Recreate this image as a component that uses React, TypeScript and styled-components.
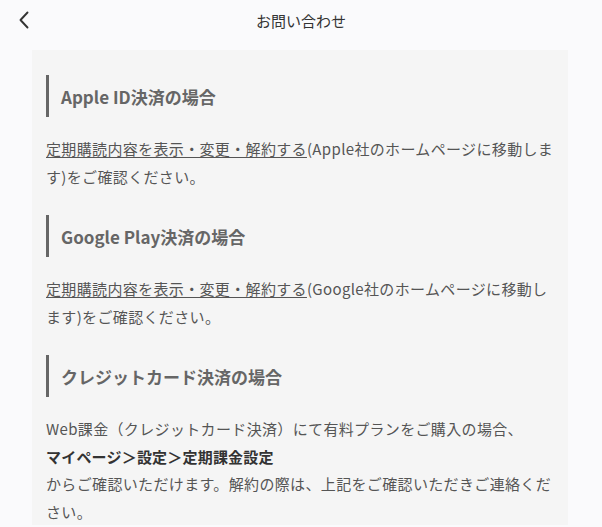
import React from 'react'
import styled, { createGlobalStyle } from 'styled-components'

const GlobalStyle = createGlobalStyle`
  html, body {
    margin: 0;
    padding: 0;
    background: #fafafc;
  }
  body {
    font-family: "Noto Sans CJK JP", "Noto Sans", sans-serif;
    color: #555;
  }
`

function BackIcon() {
  return (
    <svg width="14" height="20" viewBox="0 0 14 20" fill="none">
      <path d="M10.5 2.5 L3.5 10 L10.5 17.5" stroke="#333" strokeWidth="1.9" strokeLinecap="round" strokeLinejoin="round" />
    </svg>
  )
}

const sections = [
  {
    title: 'Apple ID決済の場合',
    link: '定期購読内容を表示・変更・解約する',
    rest: '(Apple社のホームページに移動します)をご確認ください。',
  },
  {
    title: 'Google Play決済の場合',
    link: '定期購読内容を表示・変更・解約する',
    rest: '(Google社のホームページに移動します)をご確認ください。',
  },
]

function App() {
  return (
    <Page>
      <GlobalStyle />
      <Header>
        <BackButton>
          <BackIcon />
        </BackButton>
        <Title>お問い合わせ</Title>
      </Header>

      <Card>
        {sections.map((s) => (
          <Section key={s.title}>
            <Heading>{s.title}</Heading>
            <Body>
              <Link>{s.link}</Link>
              {s.rest}
            </Body>
          </Section>
        ))}

        <Section>
          <Heading>クレジットカード決済の場合</Heading>
          <Body>
            Web課金（クレジットカード決済）にて有料プランをご購入の場合、
            <br />
            <Strong>マイページ＞設定＞定期課金設定</Strong>
            <br />
            からご確認いただけます。解約の際は、上記をご確認いただきご連絡ください。
          </Body>
        </Section>
      </Card>
    </Page>
  )
}

const Page = styled.div`
  width: 602px;
  min-height: 527px;
`

const Header = styled.header`
  position: relative;
  display: flex;
  align-items: center;
  justify-content: center;
  height: 40px;
  margin-bottom: 10px;
`

const BackButton = styled.div`
  position: absolute;
  left: 17px;
  top: 10px;
  display: flex;
`

const Title = styled.h1`
  margin: 0;
  font-size: 15px;
  font-weight: 400;
  color: #333;
`

const Card = styled.main`
  margin: 0 34px 0 32px;
  background: #f5f5f5;
  padding: 25px 14px 0 14px;
  display: flex;
  flex-direction: column;
  gap: 25px;
`

const Section = styled.section`
  display: flex;
  flex-direction: column;
  gap: 18px;
`

const Heading = styled.h2`
  margin: 0;
  height: 42px;
  display: flex;
  align-items: center;
  border-left: 3px solid #666;
  padding-left: 12px;
  font-size: 17px;
  font-weight: 700;
  color: #666;
`

const Body = styled.p`
  margin: 0;
  font-size: 15px;
  line-height: 27.5px;
  letter-spacing: 0.35px;
  color: #555;
`

const Link = styled.span`
  text-decoration: underline;
  text-underline-offset: 2px;
`

const Strong = styled.strong`
  font-weight: 700;
  color: #333;
  letter-spacing: 0.2px;
`

export default App
